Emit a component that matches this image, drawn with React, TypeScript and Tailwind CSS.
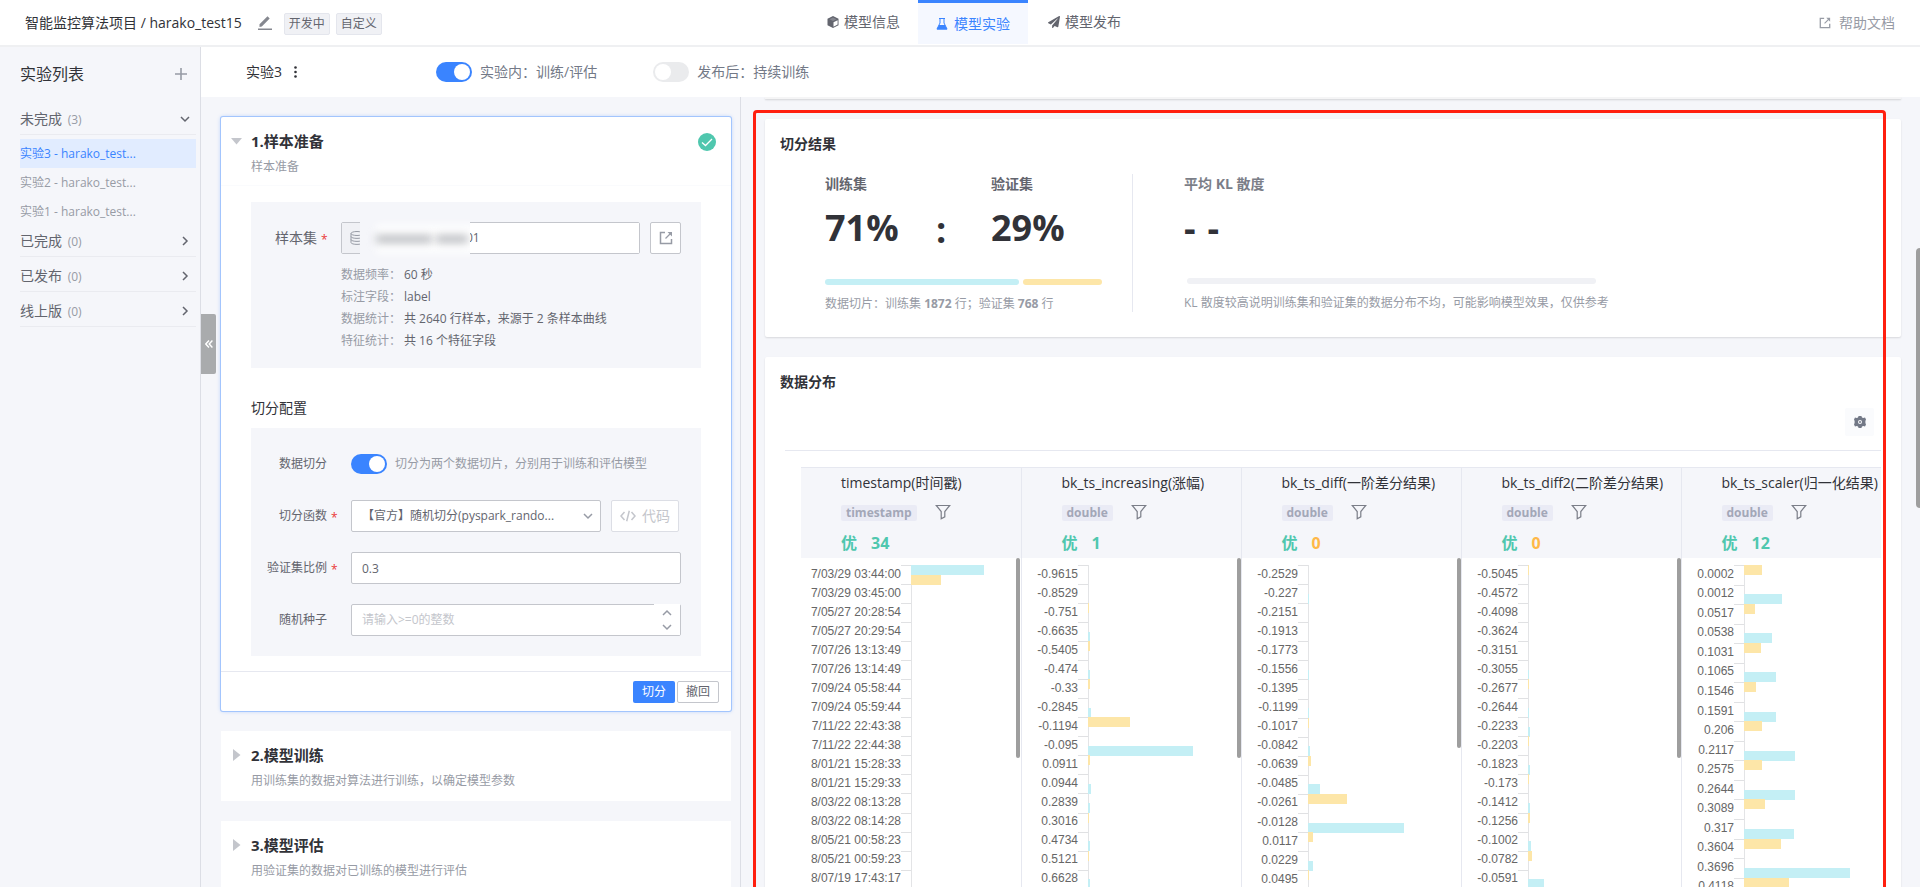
import React, { useState } from "react";
import { FaPaperPlane } from "react-icons/fa";

type Bar = [slot: number, width: number];

interface Field {
  name: string;
  type: string;
  score: number;
  axis: number;
  pitch: number;
  thumb: string;
  labels: string[];
  train: Bar[];
  verify: Bar[];
}

const FIELDS: Field[] = [
  {
    name: "timestamp(时间戳)",
    type: "timestamp",
    score: 34,
    axis: 110,
    pitch: 19.04,
    thumb: "h-[200px]",
    labels: [
      "7/03/29 03:44:00", "7/03/29 03:45:00", "7/05/27 20:28:54", "7/05/27 20:29:54", "7/07/26 13:13:49",
      "7/07/26 13:14:49", "7/09/24 05:58:44", "7/09/24 05:59:44", "7/11/22 22:43:38", "7/11/22 22:44:38",
      "8/01/21 15:28:33", "8/01/21 15:29:33", "8/03/22 08:13:28", "8/03/22 08:14:28", "8/05/21 00:58:23",
      "8/05/21 00:59:23", "8/07/19 17:43:17",
    ],
    train: [[0, 73]],
    verify: [[1, 30]],
  },
  {
    name: "bk_ts_increasing(涨幅)",
    type: "double",
    score: 1,
    axis: 66,
    pitch: 19.04,
    thumb: "h-[200px]",
    labels: [
      "-0.9615", "-0.8529", "-0.751", "-0.6635", "-0.5405", "-0.474", "-0.33", "-0.2845", "-0.1194", "-0.095",
      "0.0911", "0.0944", "0.2839", "0.3016", "0.4734", "0.5121", "0.6628",
    ],
    train: [[7, 2], [11, 2], [15, 3], [19, 105], [23, 3], [25, 2], [29, 2], [33, 2]],
    verify: [[4, 1], [8, 2], [12, 2], [16, 42], [20, 2], [26, 1], [30, 1]],
  },
  {
    name: "bk_ts_diff(一阶差分结果)",
    type: "double",
    score: 0,
    axis: 66,
    pitch: 19.08,
    thumb: "h-[190px]",
    labels: [
      "-0.2529", "-0.227", "-0.2151", "-0.1913", "-0.1773", "-0.1556", "-0.1395", "-0.1199", "-0.1017", "-0.0842",
      "-0.0639", "-0.0485", "-0.0261", "-0.0128", "0.0117", "0.0229", "0.0495",
    ],
    train: [[3, 1], [11, 1], [15, 1], [19, 2], [23, 12], [27, 96], [31, 5]],
    verify: [[16, 1], [20, 3], [24, 39], [28, 5], [32, 1]],
  },
  {
    name: "bk_ts_diff2(二阶差分结果)",
    type: "double",
    score: 0,
    axis: 66,
    pitch: 19.04,
    thumb: "h-[200px]",
    labels: [
      "-0.5045", "-0.4572", "-0.4098", "-0.3624", "-0.3151", "-0.3055", "-0.2677", "-0.2644", "-0.2233", "-0.2203",
      "-0.1823", "-0.173", "-0.1412", "-0.1256", "-0.1002", "-0.0782", "-0.0591",
    ],
    train: [[11, 1], [15, 1], [17, 2], [21, 2], [25, 2], [29, 3], [33, 16]],
    verify: [[0, 1], [12, 1], [18, 1], [22, 1], [26, 2], [30, 4]],
  },
  {
    name: "bk_ts_scaler(归一化结果)",
    type: "double",
    score: 12,
    axis: 62,
    pitch: 19.54,
    thumb: "h-[200px]",
    labels: [
      "0.0002", "0.0012", "0.0517", "0.0538", "0.1031", "0.1065", "0.1546", "0.1591", "0.206", "0.2117", "0.2575",
      "0.2644", "0.3089", "0.317", "0.3604", "0.3696", "0.4118",
    ],
    train: [[3, 38], [7, 28], [11, 32], [15, 32], [19, 51], [23, 51], [27, 50], [31, 106]],
    verify: [[0, 18], [4, 11], [8, 17], [12, 12], [16, 18], [20, 18], [24, 21], [28, 37], [32, 45]],
  },
];

function Distribution({ field }: { field: Field }) {
  const top = 7;
  const tick = (i: number) => Math.round(top + i * field.pitch) + 0.5;
  const barTop = (slot: number) => Math.round(top + (slot * field.pitch) / 2);
  return (
    <svg className="block h-[336px] w-[216px]" viewBox="0 0 216 336" role="img" aria-label={field.name}>
      <path d={`M${field.axis + 0.5} ${top}V336`} stroke="#e3e4e6" />
      {field.train.map(([slot, width]) => (
        <rect key={`t${slot}`} x={field.axis} y={barTop(slot)} width={width} height={10} fill="#c4eff5" />
      ))}
      {field.verify.map(([slot, width]) => (
        <rect key={`v${slot}`} x={field.axis} y={barTop(slot)} width={width} height={10} fill="#fde6a8" />
      ))}
      {field.labels.map((label, i) => (
        <g key={label}>
          <path d={`M${field.axis - 10} ${tick(i)}h10`} stroke="#e0e1e3" />
          <text
            x={field.axis - 10}
            y={Math.round(top + (i + 0.5) * field.pitch) + 3}
            textAnchor="end"
            fontFamily="'Liberation Sans', sans-serif"
            fontSize="12"
            fill="#666666"
          >
            {label}
          </text>
        </g>
      ))}
    </svg>
  );
}

function CubeIcon() {
  return (
    <svg className="size-3" viewBox="0 0 12 12" aria-hidden="true">
      <path d="M6 0L11.5 2.8V9.2L6 12L0.5 9.2V2.8Z" fill="#63656e" />
      <path d="M6.5 6.3L10.6 4.2V8.6L6.5 10.8Z" fill="#fff" />
      <path d="M2.4 3.2L6 1.4L9.6 3.2L6 5Z" fill="#85878f" />
    </svg>
  );
}

function FlaskIcon() {
  return (
    <svg className="size-3" viewBox="0 0 12 12" aria-hidden="true">
      <path d="M3 0.5H9M4 0.5V5L1 11H11L8 5V0.5" fill="none" stroke="#3a84ff" />
      <path d="M3 7H9L11.3 11.5H0.7Z" fill="#3a84ff" />
    </svg>
  );
}

function OpenIcon({ className }: { className: string }) {
  return (
    <svg className={className} viewBox="0 0 14 14" fill="none" stroke="currentColor" aria-hidden="true">
      <path d="M6 1.5H1.5V12.5H12.5V8" strokeWidth="1.5" />
      <path d="M6.5 7.5L11.5 2.5" strokeWidth="1.3" />
      <path d="M8.5 1H13V5.5Z" fill="currentColor" stroke="none" />
    </svg>
  );
}

function Chevron({ className, d }: { className: string; d: string }) {
  return (
    <svg className={className} viewBox="0 0 10 10" fill="none" stroke="currentColor" strokeWidth="1.5" aria-hidden="true">
      <path d={d} />
    </svg>
  );
}

const DOWN = "M1 3L5 7L9 3";
const UP = "M1 7L5 3L9 7";
const RIGHT = "M3 1L7 5L3 9";

function Toggle({ id, on }: { id: string; on: boolean }) {
  const [checked, setChecked] = useState(on);
  return (
    <span className="relative flex h-5 w-9 shrink-0">
      <input
        id={id}
        type="checkbox"
        role="switch"
        checked={checked}
        onChange={(e) => setChecked(e.target.checked)}
        className="peer h-5 w-9 cursor-pointer appearance-none rounded-full bg-[#eaebed] checked:bg-[#3a84ff]"
      />
      <span className="pointer-events-none absolute top-0.5 left-0.5 size-4 rounded-full bg-white peer-checked:left-[18px]" />
    </span>
  );
}

function Group({ title, count, open, children }: { title: string; count: number; open?: boolean; children?: React.ReactNode }) {
  return (
    <section>
      <button
        type="button"
        aria-expanded={!!open}
        className="flex h-[35px] w-full items-center border-b border-[#eaebf0] pt-1 pr-1.5 text-left text-sm text-[#63656e]"
      >
        <span className="flex-1">
          {title} <span className="ml-0.5 text-xs text-[#979ba5]">({count})</span>
        </span>
        <Chevron className="size-2.5" d={open ? DOWN : RIGHT} />
      </button>
      {children}
    </section>
  );
}

function Sidebar() {
  return (
    <aside className="flex w-[201px] shrink-0 flex-col border-r border-[#dcdee5] bg-[#f5f6fa] pl-5">
      <div className="flex h-[53px] items-center justify-between pr-3">
        <h2 className="text-base text-[#313238]">实验列表</h2>
        <button type="button" aria-label="新建实验" className="text-[#979ba5]">
          <svg className="size-3.5" viewBox="0 0 14 14" stroke="currentColor" strokeWidth="1.6" aria-hidden="true">
            <path d="M7 1V13M1 7H13" />
          </svg>
        </button>
      </div>
      <nav className="pr-1">
        <Group title="未完成" count={3} open>
          <ul className="pt-1 text-xs leading-[29px] text-[#979ba5]">
            <li>
              <a href="#exp3" className="block bg-[#e1ecff] text-[#3a84ff]">实验3 - harako_test...</a>
            </li>
            <li><a href="#exp2" className="block">实验2 - harako_test...</a></li>
            <li><a href="#exp1" className="block">实验1 - harako_test...</a></li>
          </ul>
        </Group>
        <div className="-mt-1">
          <Group title="已完成" count={0} />
          <Group title="已发布" count={0} />
          <Group title="线上版" count={0} />
        </div>
      </nav>
    </aside>
  );
}

function Required() {
  return <span className="w-2 pt-1 text-xs text-[#ea3636]">*</span>;
}

const INFO = [
  ["数据频率：", "60 秒"],
  ["标注字段：", "label"],
  ["数据统计：", "共 2640 行样本，来源于 2 条样本曲线"],
  ["特征统计：", "共 16 个特征字段"],
];

function StepHeader({ title, note, open }: { title: string; note: string; open?: boolean }) {
  return (
    <div className="flex gap-2">
      <svg className="mt-1.5 size-3 shrink-0" viewBox="0 0 12 12" fill="#c4c6cc" aria-hidden="true">
        <path d={open ? "M0 3H11L5.5 9.5Z" : "M2 0L9.5 6L2 12Z"} />
      </svg>
      <div className="flex-1">
        <h3 className="text-[15px] leading-6 font-bold text-[#313238]">{title}</h3>
        <p className="mt-1 text-xs leading-5 text-[#979ba5]">{note}</p>
      </div>
      {open && (
        <svg className="mt-1 size-[18px]" viewBox="0 0 18 18" aria-label="已完成">
          <circle cx="9" cy="9" r="9" fill="#4fc7ae" />
          <path d="M4 9.5L7.5 12.5L14 6" fill="none" stroke="#fff" strokeWidth="1.3" />
        </svg>
      )}
    </div>
  );
}

function Steps() {
  return (
    <div className="flex w-[540px] shrink-0 flex-col gap-5 overflow-hidden border-r border-[#dcdee5] pt-5 pr-[9px] pl-5">
      <section className="shrink-0 rounded-xs bg-white shadow-[0_0_4px_rgba(58,132,255,0.4)] ring-1 ring-[#a3c5fd]">
        <div className="border-b border-[#fafbfd] pt-3 pr-[15px] pb-2 pl-2.5">
          <StepHeader title="1.样本准备" note="样本准备" open />
        </div>
        <div className="px-[30px] pt-4">
          <div className="bg-[#f5f6fa] pt-5 pr-5 pb-4 pl-6">
            <div className="flex items-center">
              <label htmlFor="sample" className="flex w-[66px] items-center gap-1 text-sm text-[#63656e]">
                样本集
                <Required />
              </label>
              <div className="relative flex h-8 flex-1 rounded-xs border border-[#c4c6cc] bg-white">
                <span className="flex w-8 items-center bg-[#f0f1f5] pl-2">
                  <svg className="size-3.5" viewBox="0 0 14 14" fill="none" stroke="#979ba5" aria-hidden="true">
                    <ellipse cx="7" cy="2.5" rx="6" ry="2" />
                    <path d="M1 2.5V11.5C1 14 13 14 13 11.5V2.5M1 5.5C1 8 13 8 13 5.5M1 8.5C1 11 13 11 13 8.5" />
                  </svg>
                </span>
                <input id="sample" defaultValue="01" className="min-w-0 flex-1 bg-white pl-[92px] text-xs text-[#63656e]" />
                <div className="pointer-events-none absolute -top-1.5 left-[18px] flex h-[44px] w-[110px] items-center gap-1 overflow-hidden bg-[#f5f6fa]" aria-hidden="true">
                  <div className="absolute top-2 left-4 h-7 w-28 bg-white blur-[4px]" />
                  <div className="relative ml-4 h-2 w-14 bg-[#b9bbc0] blur-[4px]" />
                  <div className="relative h-2 w-8 bg-[#b9bbc0] blur-[4px]" />
                </div>
              </div>
              <button type="button" aria-label="打开样本集" className="ml-2.5 flex h-8 w-[31px] items-center justify-center rounded-xs border border-[#c4c6cc] bg-white text-[#979ba5]">
                <OpenIcon className="size-3.5" />
              </button>
            </div>
            <dl className="mt-2.5 ml-[66px] text-xs leading-[22px]">
              {INFO.map(([label, value]) => (
                <div key={label} className="flex">
                  <dt className="w-[63px] text-[#979ba5]">{label}</dt>
                  <dd className="text-[#63656e]">{value}</dd>
                </div>
              ))}
            </dl>
          </div>

          <h4 className="mt-[30px] text-sm leading-5 text-[#313238]">切分配置</h4>
          <div className="mt-2.5 flex flex-col gap-5 bg-[#f5f6fa] py-5 pr-5 text-xs text-[#63656e]">
            <div className="flex h-8 items-center">
              <label htmlFor="split" className="w-[76px] text-right">数据切分</label>
              <span className="ml-6"><Toggle id="split" on /></span>
              <span className="ml-2 text-[#979ba5]">切分为两个数据切片，分别用于训练和评估模型</span>
            </div>
            <div className="flex h-8 items-center">
              <label htmlFor="fn" className="flex w-[100px] items-center justify-end gap-1 pr-3">切分函数<Required /></label>
              <div className="relative flex h-8 flex-1">
                <select id="fn" className="w-full appearance-none rounded-xs border border-[#c4c6cc] bg-white pr-6 pl-2.5 text-xs text-[#63656e]">
                  <option>【官方】随机切分(pyspark_rando...</option>
                </select>
                <Chevron className="pointer-events-none absolute top-[11px] right-2 size-2.5 text-[#979ba5]" d={DOWN} />
              </div>
              <button type="button" disabled className="mr-0.5 ml-2.5 flex h-8 w-[68px] items-center justify-center gap-1.5 rounded-xs border border-[#dcdee5] bg-white text-sm text-[#c4c6cc]">
                <svg className="h-3 w-4" viewBox="0 0 16 12" fill="none" stroke="currentColor" strokeWidth="1.5" aria-hidden="true">
                  <path d="M4.5 2L1 6L4.5 10M11.5 2L15 6L11.5 10M9.3 0.8L6.7 11.2" />
                </svg>
                代码
              </button>
            </div>
            <div className="flex h-8 items-center">
              <label htmlFor="ratio" className="flex w-[100px] items-center justify-end gap-1 pr-3">验证集比例<Required /></label>
              <input id="ratio" defaultValue="0.3" className="h-8 min-w-0 flex-1 rounded-xs border border-[#c4c6cc] bg-white px-2.5" />
            </div>
            <div className="flex h-8 items-center">
              <label htmlFor="seed" className="w-[76px] text-right">随机种子</label>
              <div className="relative ml-6 flex h-8 flex-1">
                <input id="seed" placeholder="请输入>=0的整数" className="min-w-0 flex-1 rounded-xs border border-[#c4c6cc] bg-white px-2.5 placeholder:text-[#c4c6cc]" />
                <div className="absolute top-0 right-px flex h-[31px] w-[26px] flex-col items-center justify-center gap-1 bg-white text-[#979ba5]">
                  <button type="button" aria-label="增加"><Chevron className="size-2.5" d={UP} /></button>
                  <button type="button" aria-label="减少"><Chevron className="size-2.5" d={DOWN} /></button>
                </div>
              </div>
            </div>
          </div>
        </div>
        <footer className="mt-[15px] flex h-10 items-center justify-end gap-0.5 border-t border-[#e6e8f0] pr-3 text-xs">
          <button type="button" className="h-[22px] w-[42px] rounded-xs bg-[#3a84ff] text-white">切分</button>
          <button type="button" className="h-[22px] w-[42px] rounded-xs border border-[#c4c6cc] bg-white text-[#63656e]">撤回</button>
        </footer>
      </section>

      <section className="shrink-0 bg-white px-2.5 pt-3 pb-2.5">
        <StepHeader title="2.模型训练" note="用训练集的数据对算法进行训练，以确定模型参数" />
      </section>
      <section className="shrink-0 bg-white px-2.5 pt-3 pb-2.5">
        <StepHeader title="3.模型评估" note="用验证集的数据对已训练的模型进行评估" />
      </section>
    </div>
  );
}

function Results() {
  return (
    <div className="relative min-w-0 flex-1 overflow-hidden pr-[19px] pl-6">
      <div className="h-0.5 bg-[#f5f5f6] shadow-[0_1px_2px_rgba(0,0,0,0.15)]" />
      <section className="mt-5 rounded-xs bg-white px-[15px] pt-[15px] pb-[25px] shadow-[0_1px_2px_rgba(0,0,0,0.12)]">
        <h3 className="text-sm leading-5 font-bold text-[#313238]">切分结果</h3>
        <div className="mt-5 flex pl-[45px]">
          <div className="w-[308px] border-r border-[#e6e8f0]">
            <div className="flex h-[70px]">
              <div className="w-[111px]">
                <p className="text-sm leading-5 font-bold text-[#63656e]">训练集</p>
                <p className="mt-3 text-4xl leading-[44px] font-bold text-[#313238]">71%</p>
              </div>
              <p className="w-[55px] pt-[34px] text-4xl leading-[44px] font-bold text-[#313238]">:</p>
              <div>
                <p className="text-sm leading-5 font-bold text-[#63656e]">验证集</p>
                <p className="mt-3 text-4xl leading-[44px] font-bold text-[#313238]">29%</p>
              </div>
            </div>
            <div className="mt-[35px] flex w-[277px] gap-1">
              <div className="h-1.5 w-[194px] rounded-full bg-[#c4eff5]" />
              <div className="h-1.5 flex-1 rounded-full bg-[#fde6a8]" />
            </div>
            <p className="mt-[11px] text-xs leading-4 text-[#979ba5]">
              数据切片：训练集 <b>1872</b> 行；验证集 <b>768</b> 行
            </p>
          </div>
          <div className="pl-[51px]">
            <p className="text-sm leading-5 font-bold text-[#7b7e88]">平均 KL 散度</p>
            <p className="mt-3 flex gap-3 text-4xl leading-[44px] font-bold text-[#313238]">
              <span>-</span>
              <span>-</span>
            </p>
            <div className="mt-7 ml-[3px] h-1.5 w-[409px] rounded-full bg-[#f0f1f5]" />
            <p className="mt-[11px] text-xs leading-4 text-[#979ba5]">
              KL 散度较高说明训练集和验证集的数据分布不均，可能影响模型效果，仅供参考
            </p>
          </div>
        </div>
      </section>

      <section className="mt-5 rounded-xs bg-white px-[15px] pt-[15px] shadow-[0_1px_2px_rgba(0,0,0,0.12)]">
        <h3 className="text-sm leading-5 font-bold text-[#313238]">数据分布</h3>
        <div className="mt-4 flex justify-end pr-3">
          <button type="button" aria-label="设置" className="flex h-7 w-[29px] items-center justify-center rounded-xs bg-[#fafbfd]">
            <svg className="size-3" viewBox="0 0 12 12" fill="#737987" aria-hidden="true">
              <path fillRule="evenodd" d="M4.6 0H7.4L8 1.4L9.2 2L11 1.6L12 3.6L11.4 5V7L12 8.4L11 10.4L9.2 10L8 10.6L7.4 12H4.6L4 10.6L2.8 10L1 10.4L0 8.4L0.6 7V5L0 3.6L1 1.6L2.8 2L4 1.4ZM6 4A2 2 0 1 0 6 8A2 2 0 1 0 6 4Z" />
              <circle cx="6" cy="6" r="1" />
            </svg>
          </button>
        </div>
        <div className="mx-[5px] mt-3.5 overflow-hidden border-t border-[#e6e8f0] pt-4 pl-4">
          <table className="w-[1100px] table-fixed border-collapse">
            <thead>
              <tr className="bg-[#f5f6fa]">
                {FIELDS.map((f) => (
                  <th key={f.name} scope="col" className="h-[90px] w-[220px] border-t border-r border-[#e6e8f0] p-0 pt-[5px] pl-10 text-left align-top">
                    <div className="text-sm leading-5 font-normal whitespace-nowrap text-[#313238]">{f.name}</div>
                    <div className="mt-3 flex h-4 items-center gap-[18px]">
                      <span className="rounded-xs bg-[#eaebf5] px-[5px] text-xs leading-4 text-[#a3a7b8]">{f.type}</span>
                      <button type="button" aria-label="筛选">
                        <svg className="mb-0.5 size-4" viewBox="0 0 16 16" fill="none" stroke="#7b7e88" strokeWidth="1.2" aria-hidden="true">
                          <path d="M1.3 1.5H14.7L9.8 7.5V12.8L6.2 14.8V7.5Z" />
                        </svg>
                      </button>
                    </div>
                    <div className="mt-2.5 flex gap-3.5 text-base leading-6">
                      <span className="text-[#4fc7ae]">优</span>
                      <span className={f.score === 0 ? "text-[#ffb848]" : "text-[#4fc7ae]"}>{f.score}</span>
                    </div>
                  </th>
                ))}
              </tr>
            </thead>
            <tbody>
              <tr>
                {FIELDS.map((f) => (
                  <td key={f.name} className="border-r border-[#e6e8f0] p-0 align-top">
                    <div className="flex">
                      <Distribution field={f} />
                      <div className={`-ml-px w-1 shrink-0 rounded-full bg-[#9e9e9e] ${f.thumb}`} />
                    </div>
                  </td>
                ))}
              </tr>
            </tbody>
          </table>
        </div>
      </section>
      <div className="absolute top-[151px] right-0 h-[260px] w-1 rounded-l-full bg-[#9e9e9e]" />
      <div className="pointer-events-none absolute top-[13px] right-[34px] -bottom-2 left-3 rounded border-[3px] border-[#ff1f0f]" />
    </div>
  );
}

export default function App() {
  return (
    <div className="flex h-screen flex-col overflow-hidden bg-[#f5f6fa] font-['Open_Sans','Noto_Sans_CJK_SC',sans-serif]">
      <header className="flex h-[47px] shrink-0 border-b-2 border-[#eff0f2] bg-white text-sm text-[#63656e]">
        <div className="flex flex-1 items-center pl-[25px]">
          <h1 className="text-sm text-[#313238]">智能监控算法项目 / harako_test15</h1>
          <button type="button" aria-label="编辑名称" className="ml-4 text-[#85878f]">
            <svg className="size-3.5" viewBox="0 0 14 14" fill="currentColor" aria-hidden="true">
              <path d="M0 12.5H14V14H0ZM1.5 11V8.3L9.5 0.3L11.7 2.5L3.8 10.5Z" />
            </svg>
          </button>
          <span className="mt-0.5 ml-3 h-[22px] rounded-xs border border-[#e4e6ed] bg-[#f0f1f5] px-1 text-xs leading-5">开发中</span>
          <span className="mt-0.5 ml-1.5 h-[22px] rounded-xs border border-[#e4e6ed] bg-[#f0f1f5] px-1 text-xs leading-5">自定义</span>
        </div>
        <nav className="flex pl-7">
          <a href="#info" className="flex h-11 items-center gap-[5px] pr-[18px]"><CubeIcon />模型信息</a>
          <a href="#experiment" className="flex h-11 w-[110px] items-center justify-center gap-1.5 border-t-[3px] border-[#3a84ff] bg-[#f5f8ff] text-[#3a84ff]">
            <FlaskIcon />模型实验
          </a>
          <a href="#release" className="flex h-11 items-center gap-[5px] pl-5"><FaPaperPlane className="size-3" />模型发布</a>
        </nav>
        <div className="flex flex-1 items-center justify-end pr-[25px]">
          <a href="#help" className="flex items-center gap-2 text-[#979ba5]">
            <OpenIcon className="size-3" />帮助文档
          </a>
        </div>
      </header>
      <div className="flex min-h-0 flex-1">
        <Sidebar />
        <main className="relative flex min-w-0 flex-1 flex-col">
          <div className="flex h-[50px] shrink-0 items-center bg-white pl-[45px] text-sm text-[#737987]">
            <span className="text-[#313238]">实验3</span>
            <button type="button" aria-label="更多" className="ml-3 text-[#313238]">
              <svg className="h-3 w-[3px]" viewBox="0 0 3 12" fill="currentColor" aria-hidden="true">
                <circle cx="1.5" cy="1.5" r="1.3" />
                <circle cx="1.5" cy="6" r="1.3" />
                <circle cx="1.5" cy="10.5" r="1.3" />
              </svg>
            </button>
            <label htmlFor="inner" className="ml-[139px] flex items-center gap-2"><Toggle id="inner" on />实验内：训练/评估</label>
            <label htmlFor="after" className="ml-14 flex items-center gap-2"><Toggle id="after" on={false} />发布后：持续训练</label>
          </div>
          <div className="flex min-h-0 flex-1">
            <Steps />
            <Results />
          </div>
          <button type="button" aria-label="收起" className="absolute top-[267px] left-0 flex h-[60px] w-[15px] items-center justify-center rounded-r-xs bg-[#a9abad] text-white">
            <svg className="size-2" viewBox="0 0 8 8" fill="none" stroke="currentColor" strokeWidth="1.4" aria-hidden="true">
              <path d="M4 0.5L0.8 4L4 7.5M7.4 0.5L4.2 4L7.4 7.5" />
            </svg>
          </button>
        </main>
      </div>
    </div>
  );
}
